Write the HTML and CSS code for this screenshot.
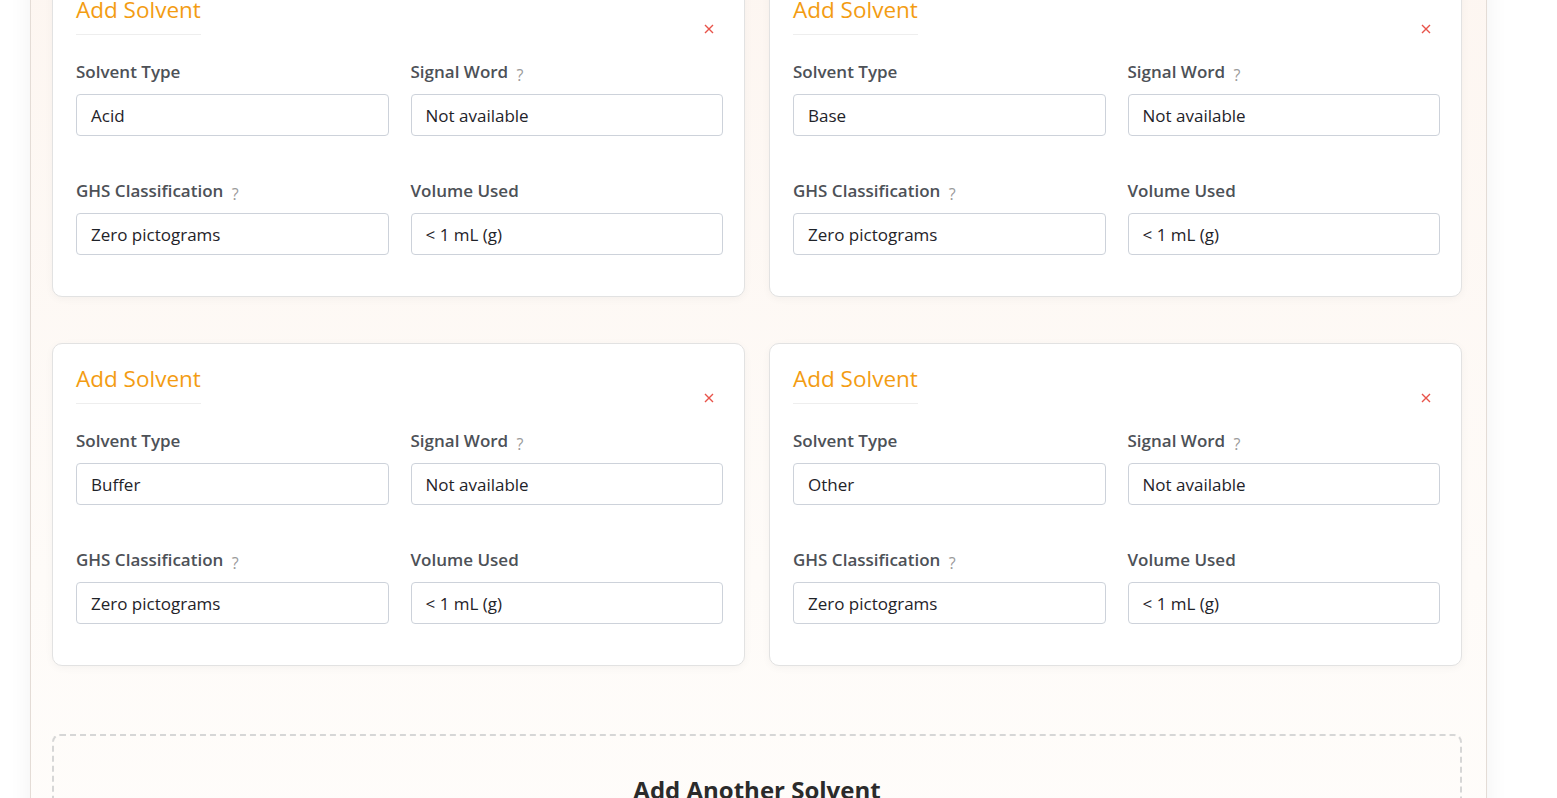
FILE: index.html
```html
<!DOCTYPE html>
<html lang="en">
<head>
<meta charset="utf-8">
<title>Solvents</title>
<link rel="stylesheet" href="styles.css">
</head>
<body>
<div class="page">
  <div class="cards">
    <section class="card">
      <div class="card-head">
        <h3 class="card-title">Add Solvent</h3>
        <button class="close" aria-label="Remove"><svg viewBox="0 0 10 10" width="10" height="10"><path d="M1 1L9 9M9 1L1 9" stroke="#e8534a" stroke-width="1.4" fill="none"/></svg></button>
      </div>
      <div class="fields">
        <div class="field"><label class="lbl">Solvent Type</label><div class="input">Acid</div></div>
        <div class="field"><label class="lbl">Signal Word <span class="help">?</span></label><div class="input">Not available</div></div>
        <div class="field"><label class="lbl">GHS Classification <span class="help">?</span></label><div class="input">Zero pictograms</div></div>
        <div class="field"><label class="lbl">Volume Used</label><div class="input">&lt; 1 mL (g)</div></div>
      </div>
    </section>
    <section class="card">
      <div class="card-head">
        <h3 class="card-title">Add Solvent</h3>
        <button class="close" aria-label="Remove"><svg viewBox="0 0 10 10" width="10" height="10"><path d="M1 1L9 9M9 1L1 9" stroke="#e8534a" stroke-width="1.4" fill="none"/></svg></button>
      </div>
      <div class="fields">
        <div class="field"><label class="lbl">Solvent Type</label><div class="input">Base</div></div>
        <div class="field"><label class="lbl">Signal Word <span class="help">?</span></label><div class="input">Not available</div></div>
        <div class="field"><label class="lbl">GHS Classification <span class="help">?</span></label><div class="input">Zero pictograms</div></div>
        <div class="field"><label class="lbl">Volume Used</label><div class="input">&lt; 1 mL (g)</div></div>
      </div>
    </section>
    <section class="card">
      <div class="card-head">
        <h3 class="card-title">Add Solvent</h3>
        <button class="close" aria-label="Remove"><svg viewBox="0 0 10 10" width="10" height="10"><path d="M1 1L9 9M9 1L1 9" stroke="#e8534a" stroke-width="1.4" fill="none"/></svg></button>
      </div>
      <div class="fields">
        <div class="field"><label class="lbl">Solvent Type</label><div class="input">Buffer</div></div>
        <div class="field"><label class="lbl">Signal Word <span class="help">?</span></label><div class="input">Not available</div></div>
        <div class="field"><label class="lbl">GHS Classification <span class="help">?</span></label><div class="input">Zero pictograms</div></div>
        <div class="field"><label class="lbl">Volume Used</label><div class="input">&lt; 1 mL (g)</div></div>
      </div>
    </section>
    <section class="card">
      <div class="card-head">
        <h3 class="card-title">Add Solvent</h3>
        <button class="close" aria-label="Remove"><svg viewBox="0 0 10 10" width="10" height="10"><path d="M1 1L9 9M9 1L1 9" stroke="#e8534a" stroke-width="1.4" fill="none"/></svg></button>
      </div>
      <div class="fields">
        <div class="field"><label class="lbl">Solvent Type</label><div class="input">Other</div></div>
        <div class="field"><label class="lbl">Signal Word <span class="help">?</span></label><div class="input">Not available</div></div>
        <div class="field"><label class="lbl">GHS Classification <span class="help">?</span></label><div class="input">Zero pictograms</div></div>
        <div class="field"><label class="lbl">Volume Used</label><div class="input">&lt; 1 mL (g)</div></div>
      </div>
    </section>
  </div>
  <div class="add-box">
    <h2 class="add-title">Add Another Solvent</h2>
  </div>
</div>
</body>
</html>
```

FILE: styles.css
```css
* { box-sizing: border-box; }
html, body { margin: 0; padding: 0; }
body {
  background: #ffffff;
  font-family: "Open Sans", "Noto Sans", "Liberation Sans", sans-serif;
  height: 798px;
  overflow: hidden;
}
.page {
  margin-left: 30px;
  width: 1457px;
  min-height: 1000px;
  padding: 0 24px 0 21px;
  border-left: 1px solid #e4dcd6;
  border-right: 1px solid #e4dcd6;
  background: linear-gradient(180deg, #fdf6f1 0%, #fefbf8 60%, #fffdfb 100%);
  box-shadow: 0 0 22px rgba(0, 0, 0, 0.06);
}
.cards {
  margin-top: -26px;
  display: grid;
  grid-template-columns: 1fr 1fr;
  column-gap: 24px;
  row-gap: 46px;
}
.card {
  background: #ffffff;
  border: 1px solid #e2e2e2;
  border-radius: 10px;
  padding: 22px 21px 41px 23px;
  box-shadow: 0 2px 8px rgba(0, 0, 0, 0.04);
}
.card-head {
  display: flex;
  justify-content: space-between;
  align-items: flex-end;
}
.card-title {
  margin: 0;
  font-size: 22.5px;
  line-height: 26px;
  font-weight: 400;
  color: #f39c12;
  padding-bottom: 11px;
  border-bottom: 1px solid #eeeeee;
}
.close {
  border: 0;
  background: none;
  padding: 0;
  width: 28px;
  height: 12px;
  display: flex;
  align-items: center;
  justify-content: center;
  margin-bottom: 0;
}
.close svg { display: block; }
.fields {
  margin-top: 25px;
  display: grid;
  grid-template-columns: 1fr 1fr;
  column-gap: 22px;
  row-gap: 43px;
}
.field { display: flex; flex-direction: column; }
.lbl {
  font-size: 17px;
  line-height: 24px;
  height: 24px;
  font-weight: 600;
  color: #4d5157;
  margin-bottom: 10px;
  white-space: nowrap;
}
.help {
  font-size: 16px;
  line-height: 1;
  font-weight: 400;
  color: #9a9a9a;
  margin-left: 4px;
  position: relative;
  top: 3px;
}
.input {
  height: 42px;
  border: 1px solid #cdd2da;
  border-radius: 4px;
  padding: 0 14px;
  display: flex;
  align-items: center;
  font-size: 17px;
  color: #1f2329;
  background: #ffffff;
}
.add-box {
  margin-top: 68px;
  border: 2px dashed #d6d6d6;
  border-radius: 8px;
  height: 200px;
  padding-top: 38px;
  text-align: center;
}
.add-title {
  margin: 0;
  font-size: 24px;
  line-height: 32px;
  font-weight: 700;
  color: #2b2b2b;
}
```
